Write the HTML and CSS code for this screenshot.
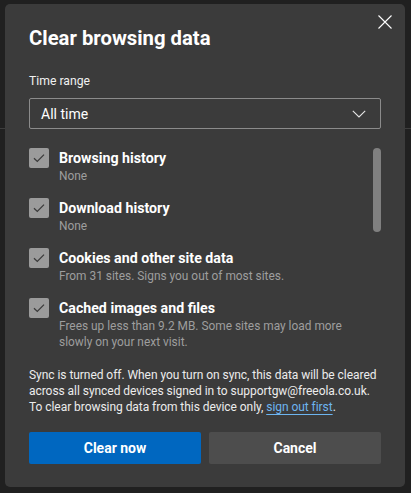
FILE: index.html
```html
<!DOCTYPE html>
<html>
<head>
<meta charset="utf-8">
<link rel="stylesheet" href="styles.css">
</head>
<body>
<div class="backdrop">
  <div class="bg-line bg-line-left"></div>
  <div class="bg-line bg-line-right"></div>
  <div class="dialog">
    <button class="close" aria-label="Close">
      <svg width="14" height="14" viewBox="0 0 14 14"><path d="M0.5 0.5 L13.5 13.5 M13.5 0.5 L0.5 13.5" stroke="#ffffff" stroke-width="1.1" fill="none"/></svg>
    </button>
    <h1 class="title">Clear browsing data</h1>
    <div class="field-label">Time range</div>
    <div class="select">
      <span>All time</span>
      <svg width="14" height="8" viewBox="0 0 14 8"><path d="M0.8 0.8 L7 7 L13.2 0.8" stroke="#e6e6e6" stroke-width="1.1" fill="none"/></svg>
    </div>
    <div class="list-wrap">
      <div class="list">
        <div class="item">
          <span class="check"><svg width="12" height="10" viewBox="0 0 12 10"><path d="M1 5.2 L4.3 8.4 L11 1.6" stroke="#3b3b3b" stroke-width="1.3" fill="none"/></svg></span>
          <div class="item-text">
            <div class="item-title">Browsing history</div>
            <div class="item-sub">None</div>
          </div>
        </div>
        <div class="item">
          <span class="check"><svg width="12" height="10" viewBox="0 0 12 10"><path d="M1 5.2 L4.3 8.4 L11 1.6" stroke="#3b3b3b" stroke-width="1.3" fill="none"/></svg></span>
          <div class="item-text">
            <div class="item-title">Download history</div>
            <div class="item-sub">None</div>
          </div>
        </div>
        <div class="item">
          <span class="check"><svg width="12" height="10" viewBox="0 0 12 10"><path d="M1 5.2 L4.3 8.4 L11 1.6" stroke="#3b3b3b" stroke-width="1.3" fill="none"/></svg></span>
          <div class="item-text">
            <div class="item-title">Cookies and other site data</div>
            <div class="item-sub">From 31 sites. Signs you out of most sites.</div>
          </div>
        </div>
        <div class="item">
          <span class="check"><svg width="12" height="10" viewBox="0 0 12 10"><path d="M1 5.2 L4.3 8.4 L11 1.6" stroke="#3b3b3b" stroke-width="1.3" fill="none"/></svg></span>
          <div class="item-text">
            <div class="item-title">Cached images and files</div>
            <div class="item-sub">Frees up less than 9.2 MB. Some sites may load more slowly on your next visit.</div>
          </div>
        </div>
      </div>
      <div class="scrollbar"></div>
    </div>
    <p class="sync">Sync is turned off. When you turn on sync, this data will be cleared across all synced devices signed in to supportgw@freeola.co.uk. To clear browsing data from this device only, <a href="#">sign out first</a>.</p>
    <div class="buttons">
      <button class="btn btn-primary">Clear now</button>
      <button class="btn btn-secondary">Cancel</button>
    </div>
  </div>
</div>
</body>
</html>
```
FILE: styles.css
```css
html, body {
  margin: 0;
  padding: 0;
  background: #202020;
}
body {
  width: 411px;
  height: 493px;
  overflow: hidden;
  font-family: "Roboto", "Open Sans", sans-serif;
  color: #ffffff;
}
.backdrop {
  position: relative;
  width: 411px;
  height: 493px;
  padding: 4px 0 0 5px;
  box-sizing: border-box;
}
.bg-line {
  position: absolute;
  height: 1px;
  background: #3d3d3d;
  top: 128px;
}
.bg-line-left { left: 0; width: 6px; }
.bg-line-right { right: 0; width: 6px; }
.dialog {
  position: relative;
  width: 400px;
  height: 483px;
  background: #3b3b3b;
  border-radius: 5px;
  box-sizing: border-box;
  padding: 20px 24px 0 24px;
  display: flex;
  flex-direction: column;
}
.close {
  position: absolute;
  top: 7px;
  right: 9px;
  width: 22px;
  height: 22px;
  background: none;
  border: 0;
  padding: 0;
  display: flex;
  align-items: center;
  justify-content: center;
}
.title {
  margin: 0;
  font-size: 20.3px;
  font-weight: 700;
  line-height: 28px;
}
.field-label {
  margin-top: 20px;
  font-size: 12.2px;
  line-height: 18px;
  color: #f0f0f0;
}
.select {
  margin-top: 8px;
  height: 31px;
  border: 1px solid #8b8b8b;
  border-radius: 2px;
  box-sizing: border-box;
  display: flex;
  align-items: center;
  justify-content: space-between;
  padding: 0 14px 0 11px;
  font-size: 14px;
}
.list-wrap {
  position: relative;
  margin-top: 19px;
  height: 204px;
  overflow: hidden;
}
.list {
  display: flex;
  flex-direction: column;
  gap: 14px;
  padding-right: 24px;
}
.item {
  display: flex;
  gap: 10px;
  align-items: flex-start;
}
.check {
  flex: none;
  width: 20px;
  height: 20px;
  border-radius: 2px;
  background: #9b9b9b;
  display: flex;
  align-items: center;
  justify-content: center;
}
.item-text {
  display: flex;
  flex-direction: column;
}
.item-title {
  font-size: 14.2px;
  font-weight: 700;
  line-height: 20px;
}
.item-sub {
  font-size: 11.9px;
  line-height: 16px;
  color: #9e9e9e;
}
.scrollbar {
  position: absolute;
  right: 0;
  top: 0;
  width: 8px;
  height: 84px;
  border-radius: 4px;
  background: #808080;
}
.sync {
  margin: 15px 0 0 0;
  font-size: 12px;
  line-height: 16px;
  color: #ececec;
  letter-spacing: -0.05px;
}
.sync a {
  color: #6db5f0;
  text-decoration: underline;
  text-underline-offset: 3px;
}
.buttons {
  margin-top: 17px;
  display: grid;
  grid-template-columns: 1fr 1fr;
  gap: 8px;
}
.btn {
  height: 32px;
  border: 0;
  border-radius: 2px;
  font-family: "Roboto", "Open Sans", sans-serif;
  font-size: 14px;
  font-weight: 700;
  color: #ffffff;
  padding: 0;
}
.btn-primary { background: #0067c0; }
.btn-secondary { background: #4d4d4d; }
```
